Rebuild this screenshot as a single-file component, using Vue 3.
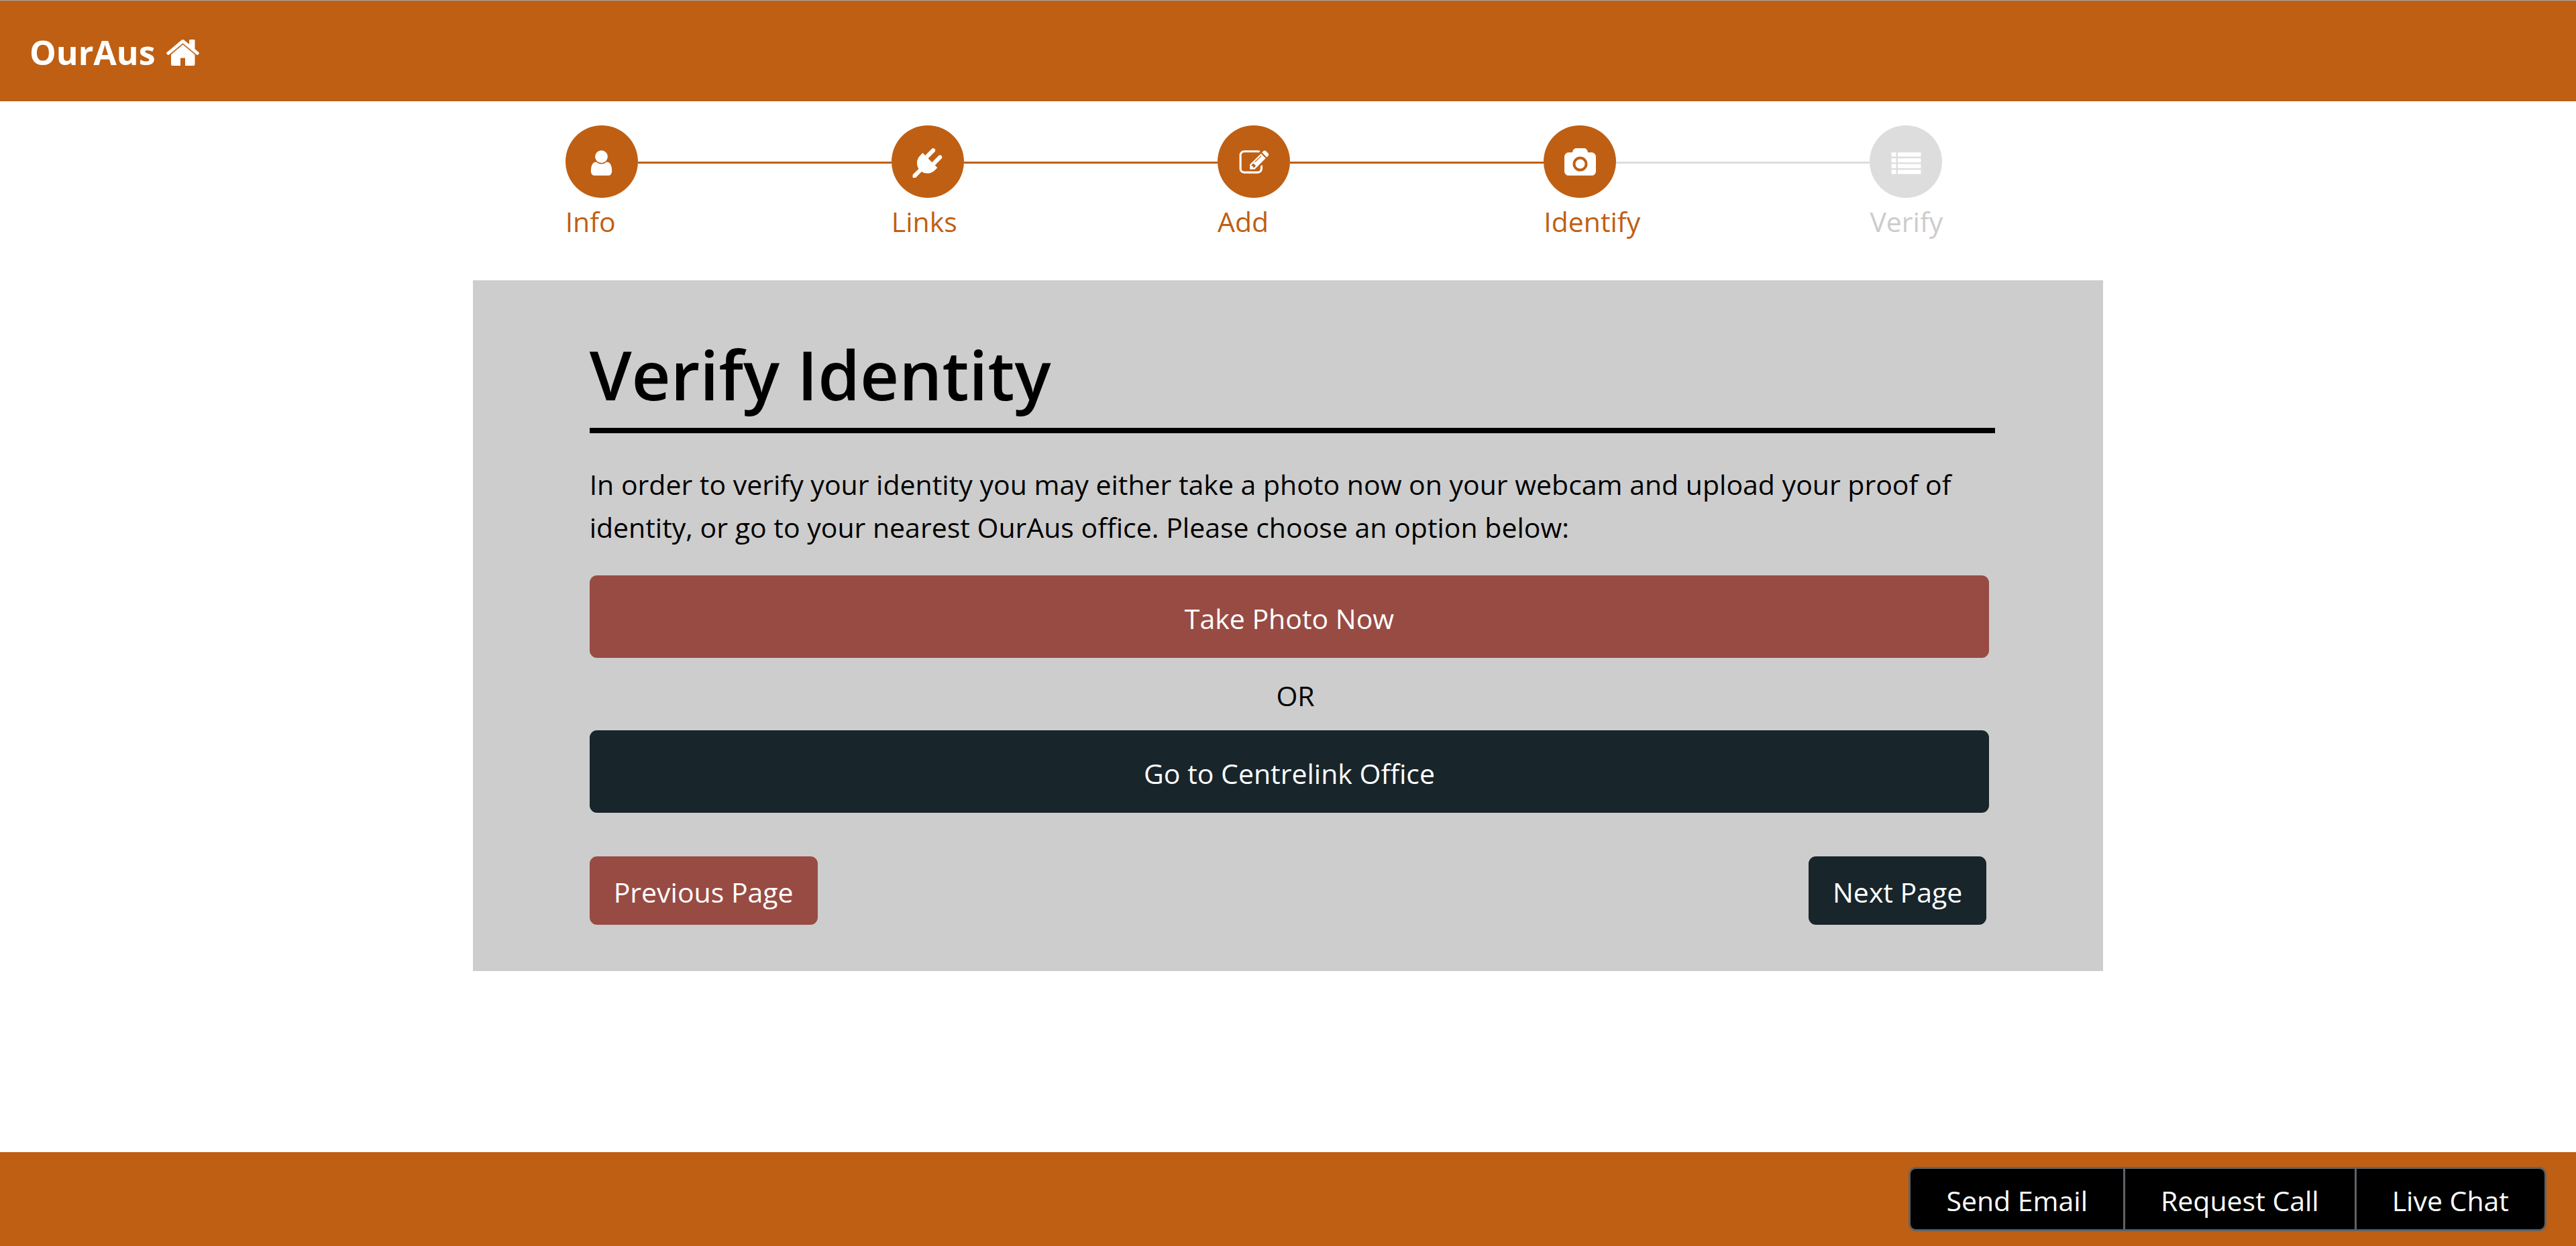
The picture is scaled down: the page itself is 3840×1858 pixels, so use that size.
<script setup>
const steps = [
  { label: 'Info', icon: 'user', done: true, lineDone: true },
  { label: 'Links', icon: 'plug', done: true, lineDone: true },
  { label: 'Add', icon: 'edit', done: true, lineDone: true },
  { label: 'Identify', icon: 'camera', done: true, lineDone: false },
  { label: 'Verify', icon: 'list', done: false, lineDone: false },
]

// Glyph outlines on a 1792-unit square
const icons = {
  user: 'M1536 1399q0 109-62.500 187t-150.500 78h-854q-88 0-150.500-78t-62.500-187q0-85 8.500-160.500t31.500-152 58.500-131 94-89 134.500-34.500q131 128 313 128t313-128q76 0 134.500 34.500t94 89 58.500 131 31.500 152 8.500 160.500zm-256-887q0 159-112.500 271.500t-271.500 112.500-271.500-112.500-112.500-271.500 112.500-271.500 271.500-112.500 271.500 112.500 112.500 271.500z',
  plug: 'M1755 453q37 38 37 90.500t-37 90.500l-401 400 150 150-160 160q-163 163-389.500 186.500t-411.500-100.500l-362 362h-181v-181l362-362q-124-185-100.500-411.500t186.500-389.500l160-160 150 150 400-401q38-37 91-37t90 37 37 90.500-37 90.500l-400 401 234 234 401-400q38-37 91-37t90 37z',
  edit: 'M888 1184l116-116-152-152-116 116v56h96v96h56zm440-720q-16-16-33 1l-350 350q-17 17-1 33t33-1l350-350q17-17 1-33zm80 594v190q0 119-84.500 203.500t-203.500 84.500h-832q-119 0-203.500-84.500t-84.500-203.500v-832q0-119 84.500-203.500t203.500-84.500h832q63 0 117 25 15 7 18 23 3 17-9 29l-49 49q-14 14-32 8-23-6-45-6h-832q-66 0-113 47t-47 113v832q0 66 47 113t113 47h832q66 0 113-47t47-113v-126q0-13 9-22l64-64q15-15 35-7t20 29zm-96-738l288 288-672 672h-288v-288zm444 132l-92 92-288-288 92-92q28-28 68-28t68 28l152 152q28 28 28 68t-28 68z',
  camera: 'M896 672q119 0 203.500 84.500t84.500 203.500-84.500 203.500-203.500 84.500-203.500-84.500-84.500-203.500 84.500-203.500 203.500-84.500zm704-416q106 0 181 75t75 181v896q0 106-75 181t-181 75h-1408q-106 0-181-75t-75-181v-896q0-106 75-181t181-75h224l51-136q19-49 69.500-84.500t103.500-35.500h512q53 0 103.500 35.500t69.500 84.500l51 136h224zm-704 1152q185 0 316.500-131.500t131.500-316.500-131.500-316.500-316.500-131.500-316.500 131.500-131.500 316.500 131.500 316.500 316.500 131.500z',
  list: 'M0 1312h288v256h-288zM0 960h288v256h-288zM0 608h288v256h-288zM0 256h288v256h-288zM384 1312h1408v256h-1408zM384 960h1408v256h-1408zM384 608h1408v256h-1408zM384 256h1408v256h-1408z',
}

const contacts = ['Send Email', 'Request Call', 'Live Chat']
</script>

<template>
  <div class="page">
    <header class="topbar">
      <a class="brand" href="#">
        OurAus
        <svg class="home" viewBox="0 0 49 39" aria-hidden="true">
          <path d="M24.500 7.500 42.500 22.500V37q0 2-2 2H28V27.500H21V39H9q-2 0-2-2V22.500Z" />
          <path d="M22.500.8q2-1.500 4 0L34 7V1.500Q34 0 35.500 0H41q1.500 0 1.500 1.500V14L48.500 19.300Q49.300 20.300 48.500 21.300L47 22.700Q46 23.300 45 22.600L24.500 5.500 4 22.600Q3 23.300 2 22.700L.5 21.300Q-.3 20.300.5 19.300Z" />
        </svg>
      </a>
    </header>

    <main class="content">
      <ol class="steps">
        <li v-for="step in steps" :key="step.label" class="step" :class="{ done: step.done }">
          <div class="track">
            <span class="dot">
              <svg class="glyph" viewBox="-64 0 1920 1792" aria-hidden="true">
                <path :d="icons[step.icon]" />
              </svg>
            </span>
            <span class="line" :class="{ filled: step.lineDone }"></span>
          </div>
          <span class="label">{{ step.label }}</span>
        </li>
      </ol>

      <section class="panel">
        <h1 class="title">Verify Identity</h1>
        <p class="intro">
          In order to verify your identity you may either take a photo now on your webcam and upload your proof of identity, or go to your nearest OurAus office. Please choose an option below:
        </p>
        <div class="choices">
          <button type="button" class="btn wide red">Take Photo Now</button>
          <p class="or">OR</p>
          <button type="button" class="btn wide dark">Go to Centrelink Office</button>
        </div>
        <div class="pager">
          <button type="button" class="btn red">Previous Page</button>
          <button type="button" class="btn dark">Next Page</button>
        </div>
      </section>
    </main>

    <footer class="bottombar">
      <div class="group">
        <button v-for="item in contacts" :key="item" type="button" class="contact">{{ item }}</button>
      </div>
    </footer>
  </div>
</template>

<style>
body {
  margin: 0;
}
</style>

<style scoped>
.page {
  display: flex;
  flex-direction: column;
  box-sizing: border-box;
  min-height: 100vh;
  border-top: 1px solid #a9a9a9;
  background: #fff;
  color: #000;
  font-family: 'Segoe UI', 'Open Sans', 'Noto Sans', sans-serif;
  font-size: 41px;
  line-height: 64px;
}

.topbar {
  display: flex;
  align-items: center;
  box-sizing: border-box;
  height: 150px;
  padding: 4px 44px 0;
  background: #bf5f13;
}

.brand {
  display: flex;
  align-items: center;
  gap: 16px;
  color: #fff;
  font-size: 50px;
  font-weight: 700;
  text-decoration: none;
}

.home {
  width: 49px;
  height: 39px;
  fill: #fff;
}

.content {
  flex: 1;
  width: 63.3%;
  margin: 0 auto;
}

.steps {
  display: flex;
  margin: 0;
  padding: 36px 240px 56px 138px;
  list-style: none;
}

.step {
  flex: 1;
  color: #ccc;
}

.step:last-child {
  flex: none;
  width: 108px;
}

.step:last-child .line {
  display: none;
}

.track {
  display: flex;
  align-items: center;
}

.dot {
  display: flex;
  align-items: center;
  justify-content: center;
  box-sizing: border-box;
  width: 108px;
  height: 108px;
  padding-top: 4px;
  border-radius: 50%;
  background: #ddd;
}

.glyph {
  width: 47px;
  height: 44px;
  fill: #fff;
}

.line {
  flex: 1;
  height: 3px;
  margin-top: 3px;
  background: #ddd;
}

.line.filled,
.done .dot {
  background: #bf5f13;
}

.label {
  display: block;
  padding-top: 3px;
}

.done .label {
  color: #bf5f13;
}

.panel {
  padding: 72px 161px 69px 174px;
  background: #cdcdcd;
}

.title {
  margin: 0 0 44px;
  padding-bottom: 12px;
  border-bottom: 8px solid #000;
  font-size: 101px;
  font-weight: 600;
  line-height: 136px;
}

.intro {
  margin: 0 0 40px;
}

.choices,
.pager {
  margin-right: 9px;
}

.btn {
  padding: 21px 36px 17px;
  border: 0;
  border-radius: 11px;
  color: #fff;
  font: inherit;
}

.wide {
  display: block;
  width: 100%;
  height: 123px;
}

.red {
  background: #984b43;
}

.dark {
  background: #18252b;
}

.or {
  margin: 0;
  padding: 24px 0 20px 18px;
  text-align: center;
}

.pager {
  display: flex;
  justify-content: space-between;
  padding: 65px 4px 0 0;
}

.bottombar {
  display: flex;
  justify-content: flex-end;
  align-items: center;
  height: 140px;
  padding: 0 44px;
  background: #bf5f13;
}

.group {
  display: flex;
  border: 3px solid #5f6366;
  border-radius: 11px;
  overflow: hidden;
}

.contact {
  height: 90px;
  padding: 4px 53px 0;
  border: 0;
  background: #000;
  color: #fff;
  font: inherit;
}

.contact + .contact {
  border-left: 3px solid #5f6366;
}
</style>
